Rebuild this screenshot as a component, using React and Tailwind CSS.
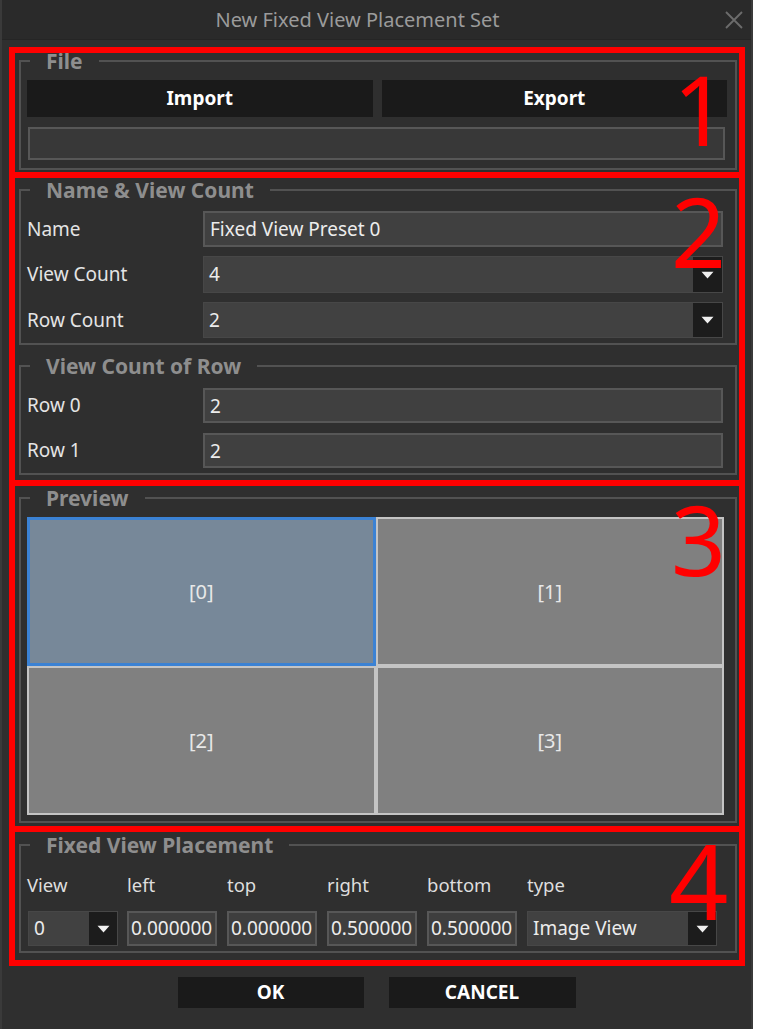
import React from "react";

const font = { fontFamily: '"Noto Sans", "DejaVu Sans", sans-serif' };

const Caret = () => (
  <svg width="13" height="8" viewBox="0 0 13 8" className="block">
    <path d="M0.5 0.8 H12.5 L6.5 7.6 Z" fill="#f0f0f0" />
  </svg>
);

const Group = ({ title, className = "", children }) => (
  <fieldset className={`ml-[4px] mr-[2px] border-2 border-[#525252] pl-[6px] ${className}`}>
    <legend className="ml-[3px] px-4 h-[16px] leading-[16px] text-[21px] font-bold text-[#8e8e8e]">
      {title}
    </legend>
    {children}
  </fieldset>
);

const TextBox = ({ value, className = "" }) => (
  <input
    readOnly
    value={value}
    className={`block border-2 border-[#575757] bg-[#3e3e3e] text-[19px] text-[#ececec] outline-none ${className}`}
  />
);

const Select = ({ value, className = "", arrow = "w-[29px]" }) => (
  <div className={`flex border border-[#474747] bg-[#414141] ${className}`}>
    <div className="flex flex-1 items-center pl-[5px] text-[19px] text-[#ececec]">{value}</div>
    <div className={`flex items-center justify-center bg-[#1c1c1c] ${arrow}`}>
      <Caret />
    </div>
  </div>
);

const Marker = ({ n, className }) => (
  <span className={`absolute text-[96px] leading-none text-[#ff0000] pointer-events-none ${className}`}>
    {n}
  </span>
);

const cells = ["[0]", "[1]", "[2]", "[3]"];

export default function App() {
  return (
    <div className="min-h-screen bg-white" style={font}>
      <div className="w-[753px] h-[1029px] bg-[#2f2f2f] border-x-2 border-[#3a3a3a] flex flex-col">
        {/* title bar */}
        <div className="h-[40px] shrink-0 flex items-center bg-[#2a2a2a] border-b border-[#252525]">
          <div className="flex-1 pr-[12px] text-center text-[20px] text-[#9b9b9b]">
            New Fixed View Placement Set
          </div>
          <svg width="18" height="18" viewBox="0 0 18 18" className="mr-[8px]">
            <path d="M1 1 L17 17 M17 1 L1 17" stroke="#6c6c6c" strokeWidth="1.8" />
          </svg>
        </div>

        <div className="ml-[7px] mt-[7px] w-[736px]">
          {/* 1 */}
          <div className="relative h-[131px] border-[6px] border-[#ff0000]">
            <Group title="File" className="pr-[8px] pb-[8px]">
              <div className="grid grid-cols-2 gap-[9px] pt-[11px]">
                <button className="h-[37px] bg-[#1a1a1a] text-[19px] font-bold text-white">Import</button>
                <button className="h-[37px] bg-[#1a1a1a] text-[19px] font-bold text-white">Export</button>
              </div>
              <TextBox value="" className="mt-[10px] ml-[1px] w-[697px] h-[33px] bg-[#383838]" />
            </Group>
            <Marker n="1" className="left-[658px] top-[8px]" />
          </div>

          {/* 2 */}
          <div className="relative h-[308px] border-[6px] border-t-0 border-[#ff0000] pt-[4px]">
            <Group title="Name & View Count" className="pr-[12px] pb-[5px]">
              <div className="flex flex-col gap-[9px] pt-[13px] text-[19px] text-[#e4e4e4]">
                <div className="flex items-center">
                  <span className="w-[176px]">Name</span>
                  <TextBox value="Fixed View Preset 0" className="w-[520px] h-[36px] pl-[5px] bg-[#404040] text-[19.5px]" />
                </div>
                <div className="flex items-center">
                  <span className="w-[176px]">View Count</span>
                  <Select value="4" className="w-[520px] h-[37px]" />
                </div>
                <div className="flex items-center">
                  <span className="w-[176px]">Row Count</span>
                  <Select value="2" className="w-[520px] h-[36px]" />
                </div>
              </div>
            </Group>
            <Group title="View Count of Row" className="mt-[13px] pr-[12px] pb-[5px]">
              <div className="flex flex-col gap-[10px] pt-[14px] text-[19px] text-[#e4e4e4]">
                <div className="flex items-center">
                  <span className="w-[176px]">Row 0</span>
                  <TextBox value="2" className="w-[520px] h-[35px] pl-[5px] bg-[#404040]" />
                </div>
                <div className="flex items-center">
                  <span className="w-[176px]">Row 1</span>
                  <TextBox value="2" className="w-[520px] h-[35px] pl-[5px] bg-[#404040]" />
                </div>
              </div>
            </Group>
            <Marker n="2" className="left-[656px] top-[5px]" />
          </div>

          {/* 3 */}
          <div className="relative h-[346px] border-[6px] border-t-0 border-[#ff0000] pt-[4px]">
            <Group title="Preview" className="pr-[11px] pb-[6px]">
              <div className="mt-[11px] grid grid-cols-2 grid-rows-2 h-[298px] text-[20px] text-[#e8e8e8]">
                {cells.map((c, i) => (
                  <div
                    key={c}
                    className={
                      i === 0
                        ? "flex items-center justify-center bg-[#778899] border-[3px] border-[#3b82d4]"
                        : "flex items-center justify-center bg-[#808080] border-2 border-[#c4c4c4]"
                    }
                  >
                    {c}
                  </div>
                ))}
              </div>
            </Group>
            <Marker n="3" className="left-[656px] top-[5px]" />
          </div>

          {/* 4 */}
          <div className="relative h-[134px] border-[6px] border-t-0 border-[#ff0000] pt-[5px]">
            <Group title="Fixed View Placement" className="pb-[5px]">
              <div className="flex gap-[10px] pt-[20px] h-[44px] text-[18.5px] leading-[24px] text-[#dedede]">
                {["View", "left", "top", "right", "bottom", "type"].map((h) => (
                  <span key={h} className="w-[90px]">{h}</span>
                ))}
              </div>
              <div className="flex gap-[10px] mt-[14px] h-[35px]">
                <Select value="0" className="w-[90px] ml-[1px] -mr-[1px]" arrow="w-[28px]" />
                <TextBox value="0.000000" className="w-[90px] pl-[2px]" />
                <TextBox value="0.000000" className="w-[90px] pl-[2px]" />
                <TextBox value="0.500000" className="w-[90px] pl-[2px]" />
                <TextBox value="0.500000" className="w-[90px] pl-[2px]" />
                <Select value="Image View" className="w-[190px]" arrow="w-[28px]" />
              </div>
            </Group>
            <Marker n="4" className="left-[654px] -top-[4px] text-[104px]" />
          </div>
        </div>

        <div className="mt-[11px] flex justify-center gap-[25px]">
          <button className="w-[186px] h-[31px] bg-[#1a1a1a] text-[19px] font-bold text-white">OK</button>
          <button className="w-[187px] h-[31px] bg-[#1a1a1a] text-[19px] font-bold text-white">CANCEL</button>
        </div>
      </div>
    </div>
  );
}
